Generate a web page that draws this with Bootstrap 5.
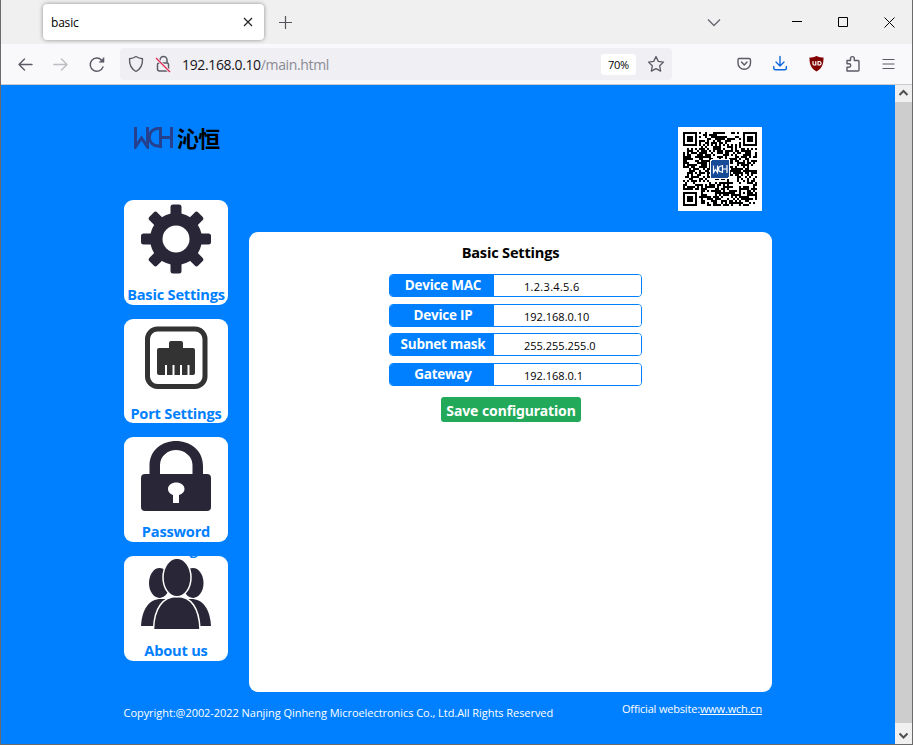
<!DOCTYPE html>
<html lang="en">
<head>
<meta charset="utf-8">
<title>basic</title>
<link href="https://cdn.jsdelivr.net/npm/bootstrap@5.3.0/dist/css/bootstrap.min.css" rel="stylesheet">
<style>
html,body{height:745px;overflow:hidden}
body{font-family:"Open Sans","Noto Sans",sans-serif;color:#000;line-height:1}
svg{display:block;flex:none}
.win{width:913px;height:745px;border:1px solid #6b6b6b;border-top:0}
.tabstrip{height:44px;background:#f0f0f0;padding-left:42px}
.tab-active{width:221px;height:36px;background:#fff;border-radius:4px;box-shadow:0 0 4px rgba(0,0,0,.42);font-size:12px;padding:0 11px 0 8px;margin-bottom:1px;letter-spacing:-.2px}
.tab-active span{padding-top:2px}
.new-tab{margin-left:15px}
.win-btns{margin-left:48px;margin-right:-7px}
.toolbar{height:41px;background:#f9f9fb;border-bottom:1px solid #ccccd0}
.urlbar{width:552px;height:32px;background:#f0f0f4;border-radius:4px;margin-left:14px;padding-left:8px}
.lock-off{margin:0 4px 0 10px}
.url{font-size:14px;color:#15141a;letter-spacing:-.36px;margin-left:6px;padding-top:2px}
.url span{color:#8a8a92}
.zoomlvl{width:35px;height:21px;background:#fff;border-radius:3px;font-size:11px;letter-spacing:-.3px;margin-right:11px}
.star{margin-right:7px}
.site{background:#0080ff;height:659px}
.sheet{width:648px;margin-left:123px;padding-top:42px}
.side{width:104px;margin-right:21px}
.brand{height:22px;margin:0 0 51px 10px;font:700 22px/20px "Noto Sans CJK SC",sans-serif;letter-spacing:-.7px}
.brand span{padding-left:3px}
.tiles{display:grid;row-gap:13.9px}
.tile{height:104.75px;background:#fff;border-radius:9px;padding-top:4px;color:#0080ff;font-weight:700;font-size:14.6px;text-decoration:none}
.tile svg{margin:0 auto 11px}
.tile:last-child svg{margin-top:-1px;margin-bottom:12px}
.tile span{display:block;position:relative;z-index:1;line-height:18px;margin:0 -4px;text-align:center;letter-spacing:-.2px}
.tile span.wraps{margin:0 8px}
.qr{width:84px;height:84px;background:#fff;margin:0 10px 21px auto}
.panel{width:523px;height:460px;background:#fff;border-radius:9px;padding-top:10px}
.panel h1{font-size:14.6px;font-weight:700;line-height:20px;margin:0 0 12px;letter-spacing:-.2px}
.fields{width:253px;margin-left:140px;display:grid;row-gap:6.67px}
.field{height:23px;border:1px solid #0080ff;border-radius:4px;overflow:hidden}
.field label{width:104px;background:#0080ff;color:#fff;font-size:13.5px;font-weight:700;text-align:center;line-height:21px;letter-spacing:-.25px;padding-left:2px}
.field input{width:147px;border:0;padding:3px 0 0 30px;font-size:11px;font-family:inherit;background:#fff;line-height:18px;outline:0}
#mac{letter-spacing:.3px}
.save{width:140px;height:25px;border:0;border-radius:3px;background:#22a95a;color:#fff;font:700 14px/27px "Noto Sans",sans-serif;letter-spacing:-.1px;margin:11px 0 0 192px;padding:0;white-space:nowrap;display:block}
.foot{color:#fff;font-size:11px;padding:10px 10px 0 0;line-height:14px;white-space:nowrap}
.foot a{color:#fff}
.copy{padding-top:4px;letter-spacing:-.05px;margin-left:-.5px}
.official{letter-spacing:-.18px}
.sbar{width:17px;background:#cdcdcd}
.sbar div{height:17px;background:#f0f0f0}
.sbar div:last-child{height:21px}
</style>
<script src="https://cdn.jsdelivr.net/npm/bootstrap@5.3.0/dist/js/bootstrap.bundle.min.js"></script>
</head>
<body>
<div class="win">
  <div class="tabstrip d-flex align-items-center">
    <div class="tab-active d-flex align-items-center justify-content-between"><span>basic</span>
      <svg width="11" height="10" viewBox="0 0 11 10"><path d="M2 1l8 8M10 1l-8 8" stroke="#222" stroke-width="1.200"/></svg></div>
    <svg class="new-tab" width="14" height="14"><path d="M6.500 1v13M0 7.500h13" stroke="#55555e" stroke-width="1.200"/></svg>
    <svg class="ms-auto" width="14" height="9"><path d="M1 1.500l6 6 6-6" fill="none" stroke="#66666f" stroke-width="1.300"/></svg>
    <svg class="win-btns" width="150" height="14" viewBox="0 0 150 14" fill="none" stroke="#000"><path d="M23 6.500h10M69.500 2.500h9v9h-9zM115.500 2.500l10 10M125.500 2.500l-10 10"/></svg>
  </div>
  <div class="toolbar d-flex align-items-center">
    <svg width="105" height="20" viewBox="0 0 105 20" fill="none" stroke="#5b5b66" stroke-width="1.400" stroke-linecap="round" stroke-linejoin="round"><path d="M18 10.500h13M23.500 5L18 10.500l5.500 5.500"/><path stroke="#bcbcc2" d="M53 10.500h13M60.500 5l5.500 5.500-5.500 5.500"/><path d="M102 13a6.600 6.600 0 1 1-1.300-6.800"/><path d="M98.500 8.200h4.500V3.700z" fill="#5b5b66" stroke-width=".6"/></svg>
    <div class="urlbar d-flex align-items-center">
      <svg width="16" height="18" viewBox="0 0 16 18" fill="none" stroke="#5b5b66" stroke-width="1.400" stroke-linejoin="round"><path d="M8 1.500c2 1.400 4 2 6.500 2.200.3 6-1.500 10-6.500 12.800C3 13.700 1.200 9.700 1.500 3.700 4 3.500 6 2.900 8 1.500z"/></svg>
      <svg class="lock-off" width="18" height="18" viewBox="0 0 18 18" fill="none" stroke="#5b5b66" stroke-width="1.500"><path d="M6 8V5a3.500 3.500 0 0 1 7 0v3M5 8h8q1.500 0 1.500 1.500V14q0 2-2 2H5.500q-2 0-2-2V9.500Q3.500 8 5 8z"/><path d="M2 3l14 14" stroke="#f0f0f4" stroke-width="3"/><path d="M2 3l14 14" stroke="#e22850" stroke-width="1.300"/></svg>
      <div class="url">192.168.0.10<span>/main.html</span></div>
      <div class="zoomlvl ms-auto d-flex align-items-center justify-content-center">70%</div>
      <svg class="star" width="18" height="18" viewBox="0 0 18 18" fill="none" stroke="#5b5b66" stroke-width="1.300" stroke-linejoin="round"><path d="M9 1.500l2.300 4.900 5.200.7-3.800 3.700.9 5.300L9 13.600l-4.600 2.500.9-5.300L1.500 7.100l5.200-.7z"/></svg>
    </div>
    <svg class="ms-auto" width="175" height="20" viewBox="0 0 175 20" fill="none" stroke="#5b5b66" stroke-width="1.400" stroke-linecap="round" stroke-linejoin="round">
      <path d="M2 4.500h10q1.500 0 1.500 1.500v3a6.200 6.200 0 0 1-12.500 0V6q0-1.500 1-1.500zM4.500 8L7.300 11 10 8"/>
      <path stroke="#1268de" d="M43 2.500v9M39 8l4 4 4-4M36.800 12.500V14q0 1.800 1.800 1.800h9q1.800 0 1.800-1.800v-1.500"/>
      <path fill="#800000" stroke="none" d="M79.500 2c2.500 1 4.500 1.500 7 1.600.2 6.400-1.500 11-7 14-5.500-3-7.200-7.600-7-14 2.500-.1 4.500-.6 7-1.600z"/>
      <path stroke="#fff" stroke-width="1.200" d="M76 7.500v2.200q0 1.300 1.300 1.300h1.500V7.500M81 7.500h1.300a1.700 1.700 0 0 1 0 3.500H81z"/>
      <path d="M110 17v-3.700h2a1.700 1.700 0 0 0 0-3.500h-2V6.500h3.500V4.500a1.900 1.900 0 0 1 3.800 0v2h3.700q1 0 1 1V16q0 1-1 1z"/>
      <path stroke-linecap="butt" stroke-width="1.200" d="M145.500 5.500h12M145.500 10h12M145.500 14.500h12"/>
    </svg>
  </div>
  <div class="site d-flex">
    <main class="sheet">
      <div class="d-flex">
        <div class="side">
          <div class="brand d-flex">
            <svg width="40" height="22" viewBox="0 0 40 22" fill="none" stroke="#24408e" stroke-width="3"><path d="M1.500 0v20L7.500 11l6 9V0M27 1.500h-3a8.600 8.600 0 0 0 0 17.500h3M26.500 0v21M37.500 0v21M26.500 10.500H38"/></svg>
            <span>沁恒</span>
          </div>
          <nav class="tiles">
            <a class="tile" href="#">
              <svg width="70" height="70" viewBox="-35 -35 70 70" fill="#292737"><rect x="-5.500" y="-34.500" width="11" height="69" rx="2.500"/><rect x="-35" y="-5.500" width="70" height="11" rx="2.500"/><g transform="rotate(45)"><rect x="-5.500" y="-34.500" width="11" height="69" rx="2.500"/><rect x="-34.500" y="-5.500" width="69" height="11" rx="2.500"/></g><circle r="26"/><circle r="13.500" fill="#fff"/></svg>
              <span>Basic Settings</span></a>
            <a class="tile" href="#">
              <svg width="70" height="70" viewBox="0 0 70 70" fill="#333"><rect x="6.500" y="6" width="57.500" height="57.500" rx="10" fill="none" stroke="#333" stroke-width="5"/><path d="M18 25h10v-5q0-2 2-2h10q2 0 2 2v5h10q2 0 2 2v23q0 2-2 2h-3.500v-10h-2v10h-5.500v-10h-2v10h-5.500v-10h-2v10H26v-10h-2v10h-6q-2 0-2-2V27q0-2 2-2z"/></svg>
              <span>Port Settings</span></a>
            <a class="tile" href="#">
              <svg width="70" height="70" viewBox="0 0 70 70" fill="#292737"><path fill-rule="evenodd" d="M8.500 33V25C8.500 9 21 0 35 0s27 9 27 25v8h4q4 0 4 4v29q0 4-4 4H4q-4 0-4-4V37q0-4 4-4zM19 33h32.500V24C51.500 15 43 9 35 9S19 15 19 24zM32 54v8h6v-8q5.500-2 5.500-6c0-4-4-6.500-8.300-6.500S27 44 27 48q0 4 5 6z"/></svg>
              <span class="wraps">Password Settings</span></a>
            <a class="tile" href="#">
              <svg width="70" height="70" viewBox="0 0 70 70" fill="#292737"><ellipse cx="18.500" cy="24" rx="10.500" ry="15"/><ellipse cx="52" cy="24" rx="10.500" ry="15"/><path d="M0 67C1 50 8 40 20 40h30c12 0 19 10 20 27z"/><path stroke="#fff" stroke-width="1.500" d="M12.500 71C13 49 22 37.500 36 37.500S58.500 49 59 71z"/><ellipse stroke="#fff" stroke-width="1.500" cx="36" cy="18.500" rx="14" ry="19.300"/></svg>
              <span>About us</span></a>
          </nav>
        </div>
        <div>
          <div class="qr"><svg id="qr" width="84" height="84" viewBox="0 0 84 84" shape-rendering="crispEdges"></svg></div>
          <section class="panel">
            <h1 class="text-center">Basic Settings</h1>
            <form>
              <div class="fields">
                <div class="field d-flex"><label for="mac">Device MAC</label><input id="mac" value="1.2.3.4.5.6"></div>
                <div class="field d-flex"><label for="ip">Device IP</label><input id="ip" value="192.168.0.10"></div>
                <div class="field d-flex"><label for="mask">Subnet mask</label><input id="mask" value="255.255.255.0"></div>
                <div class="field d-flex"><label for="gw">Gateway</label><input id="gw" value="192.168.0.1"></div>
              </div>
              <button type="button" class="save">Save configuration</button>
            </form>
          </section>
        </div>
      </div>
      <footer class="foot d-flex justify-content-between">
        <div class="copy">Copyright:@2002-2022 Nanjing Qinheng Microelectronics Co., Ltd.All Rights Reserved</div>
        <div class="official">Official website:<a href="#">www.wch.cn</a></div>
      </footer>
    </main>
    <div class="sbar ms-auto d-flex flex-column justify-content-between">
      <div><svg width="17" height="17" fill="none" stroke="#505050" stroke-width="2"><path d="M4.500 10l4-4 4 4"/></svg></div>
      <div><svg width="17" height="21" fill="none" stroke="#505050" stroke-width="2"><path d="M4.500 10.500l4 4 4-4"/></svg></div>
    </div>
  </div>
</div>
<script>
// 37x37 module code with finder, timing and alignment patterns and a centre badge
(function(){
  var n=37,seed=77,d='';
  function rnd(){seed=(seed*1103515245+12345)%2147483648;return seed/2147483648}
  function ring(x,y,cx,cy){return Math.max(Math.abs(x-cx),Math.abs(y-cy))}
  for(var y=0;y<n;y++)for(var x=0;x<n;x++){
    var on=rnd()<.54,f=[[3,3],[33,3],[3,33]];
    if(x==6||y==6)on=(x+y)%2==0;
    f.forEach(function(c){var r=ring(x,y,c[0],c[1]);if(r<=4)on=r!=4&&r!=2});
    var a=ring(x,y,30,30);if(a<=2)on=a!=1;
    if(on)d+='M'+(5+x*2)+' '+(5+y*2)+'h2v2h-2z';
  }
  document.getElementById('qr').innerHTML='<path d="'+d+'"/><rect x="32" y="32" width="20" height="20" rx="2" fill="#fff"/><rect x="33" y="33" width="18" height="18" rx="2" fill="#174b98"/><path shape-rendering="auto" d="M35.500 38.500v7l2-3 2 3v-7M44.500 39h-1a3 3 0 0 0 0 6h1M44.500 38v8M49 38v8M44.500 42H49" fill="none" stroke="#fff" stroke-width="1.200"/>';
})();
</script>
</body>
</html>
